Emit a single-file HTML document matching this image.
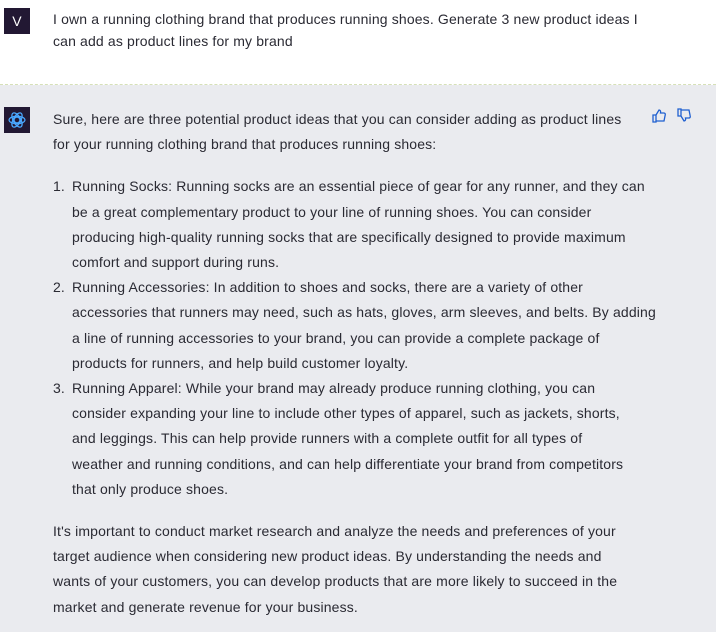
<!DOCTYPE html>
<html><head><meta charset="utf-8"><style>
body{margin:0;width:716px;height:632px;overflow:hidden;font-family:"Liberation Sans",sans-serif;font-size:14px;letter-spacing:0.15px;color:#2a2a33;}
.top{position:absolute;left:0;top:0;width:716px;height:84px;background:#fff;border-bottom:1px dashed #d6e0b8;}
.bot{position:absolute;left:0;top:85px;width:716px;height:547px;background:#eaebef;}
.av{position:absolute;left:4px;width:26px;height:26px;background:#221833;color:#fff;display:flex;align-items:center;justify-content:center;font-size:14px;}
.t{position:absolute;left:53px;white-space:nowrap;}
p{margin:0;}
.l{line-height:25.2px;}
ol{margin:0;padding:0;list-style:none;}
li{position:relative;padding-left:19px;}
li span{position:absolute;left:0;}
</style></head><body>
<div class="top">
<div class="av" style="top:8px">V</div>
<div class="t" style="top:8px;line-height:22px">I own a running clothing brand that produces running shoes. Generate 3 new product ideas I<br>can add as product lines for my brand</div>
</div>
<div class="bot">
<div class="av" style="top:22px"><svg width="20" height="20" viewBox="0 0 24 24" fill="none" stroke="#4aa8ff" stroke-width="1.5"><circle cx="12" cy="12" r="3.5"/><ellipse cx="12" cy="12" rx="9.5" ry="4.5"/><ellipse cx="12" cy="12" rx="9.5" ry="4.5" transform="rotate(60 12 12)"/><ellipse cx="12" cy="12" rx="9.5" ry="4.5" transform="rotate(120 12 12)"/></svg></div>
<svg style="position:absolute;left:651px;top:23px" width="16" height="16" viewBox="0 0 16 16" fill="none" stroke="#1f5fd0" stroke-width="1.3"><path d="M2 7h3v7H2zM5 7l3-5c1 0 2 1 1.5 3H13c1 0 1.5 1 1.2 2l-1.2 6H5"/></svg>
<svg style="position:absolute;left:676px;top:22px" width="16" height="16" viewBox="0 0 16 16" fill="none" stroke="#1f5fd0" stroke-width="1.3"><path d="M2 2h3v7H2zM5 9l3 5c1 0 2-1 1.5-3H13c1 0 1.5-1 1.2-2L13 3H5"/></svg>
<div class="t l" style="top:22px">
<p>Sure, here are three potential product ideas that you can consider adding as product lines<br>for your running clothing brand that produces running shoes:</p>
<ol style="margin-top:17px">
<li><span>1.</span>Running Socks: Running socks are an essential piece of gear for any runner, and they can<br>be a great complementary product to your line of running shoes. You can consider<br>producing high-quality running socks that are specifically designed to provide maximum<br>comfort and support during runs.</li>
<li><span>2.</span>Running Accessories: In addition to shoes and socks, there are a variety of other<br>accessories that runners may need, such as hats, gloves, arm sleeves, and belts. By adding<br>a line of running accessories to your brand, you can provide a complete package of<br>products for runners, and help build customer loyalty.</li>
<li><span>3.</span>Running Apparel: While your brand may already produce running clothing, you can<br>consider expanding your line to include other types of apparel, such as jackets, shorts,<br>and leggings. This can help provide runners with a complete outfit for all types of<br>weather and running conditions, and can help differentiate your brand from competitors<br>that only produce shoes.</li>
</ol>
<p style="margin-top:17px">It's important to conduct market research and analyze the needs and preferences of your<br>target audience when considering new product ideas. By understanding the needs and<br>wants of your customers, you can develop products that are more likely to succeed in the<br>market and generate revenue for your business.</p>
</div>
</div>
</body></html>
